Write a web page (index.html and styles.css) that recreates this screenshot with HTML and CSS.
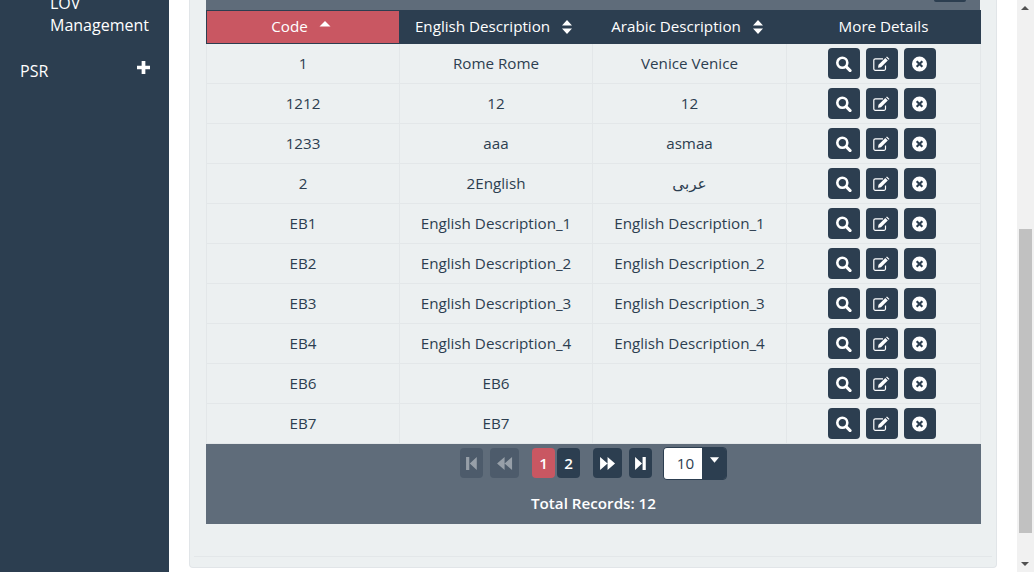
FILE: index.html
```html
<!DOCTYPE html>
<html>
<head>
    <meta charset="utf-8">
    <title>LOV Management</title>
    <link rel="stylesheet" href="styles.css">
</head>
<body>
    <svg class="icon-defs" width="0" height="0">
        <symbol id="i-search" viewBox="0 0 16 16">
            <circle cx="6.8" cy="6.8" r="5" fill="none" stroke="currentColor" stroke-width="2.6"/>
            <path d="M10.6 10.6 L14.6 14.6" stroke="currentColor" stroke-width="3" stroke-linecap="round"/>
        </symbol>
        <symbol id="i-edit" viewBox="0 0 17 16">
            <path d="M12.5 9.5 V12.8 A1.6 1.6 0 0 1 10.9 14.4 H2.4 A1.6 1.6 0 0 1 0.8 12.8 V4.4 A1.6 1.6 0 0 1 2.4 2.8 H10" fill="none" stroke="currentColor" stroke-width="1.2"/>
            <path d="M5.5 8.8 L12.3 2 L14.8 4.5 L8 11.3 L5 11.8 Z M13 1.3 L14 0.4 L16.5 2.9 L15.6 3.8 Z" fill="currentColor"/>
        </symbol>
        <symbol id="i-remove" viewBox="0 0 16 16">
            <path fill-rule="evenodd" d="M8 0.5a7.5 7.5 0 1 0 0 15A7.5 7.5 0 0 0 8 0.5z M5.9 4.4 L8 6.5 L10.1 4.4 L11.6 5.9 L9.5 8 L11.6 10.1 L10.1 11.6 L8 9.5 L5.9 11.6 L4.4 10.1 L6.5 8 L4.4 5.9 Z" fill="currentColor"/>
        </symbol>
    </svg>

    <div class="layout">
        <aside class="sidebar">
            <div class="nav-sub">LOV Management</div>
            <div class="nav-item">
                <span>PSR</span>
                <svg class="plus" viewBox="0 0 14 14"><path d="M5 0h4v5h5v4H9v5H5V9H0V5h5z" fill="currentColor"/></svg>
            </div>
        </aside>

        <main class="content">
            <div class="card">
                <div class="toolbar"><span class="toolbar-btn"></span></div>
                <table class="grid">
                    <colgroup>
                        <col class="col-a">
                        <col class="col-a">
                        <col class="col-b">
                        <col class="col-c">
                    </colgroup>
                    <thead>
                        <tr>
                            <th class="sortable sorted">Code <svg class="sort" viewBox="0 0 12 14"><path d="M6 1 L11.5 6.5 H0.5 Z" fill="currentColor"/></svg></th>
                            <th class="sortable">English Description <svg class="sort" viewBox="0 0 12 14"><path d="M6 0 L11 5.5 H1 Z M1 8.5 H11 L6 14 Z" fill="currentColor"/></svg></th>
                            <th class="sortable">Arabic Description <svg class="sort" viewBox="0 0 12 14"><path d="M6 0 L11 5.5 H1 Z M1 8.5 H11 L6 14 Z" fill="currentColor"/></svg></th>
                            <th>More Details</th>
                        </tr>
                    </thead>
                    <tbody id="rows"></tbody>
                </table>
                <div class="pager">
                    <div class="pager-row">
                        <span class="page-btn off wide-sm"><svg viewBox="0 0 12 14"><path d="M1 1h3v12H1z M11 1v12L4.5 7z" fill="currentColor"/></svg></span>
                        <span class="page-btn off wide"><svg viewBox="0 0 16 14"><path d="M8 1v12L1 7z M15 1v12L8 7z" fill="currentColor"/></svg></span>
                        <span class="pages">
                            <span class="page-btn num current">1</span>
                            <span class="page-btn num">2</span>
                        </span>
                        <span class="page-btn wide"><svg viewBox="0 0 16 14"><path d="M1 1v12l7-6z M8 1v12l7-6z" fill="currentColor"/></svg></span>
                        <span class="page-btn wide-sm"><svg viewBox="0 0 12 14"><path d="M1 1v12l6.5-6z M8 1h3v12H8z" fill="currentColor"/></svg></span>
                        <span class="page-size">
                            <span class="size-value">10</span>
                            <span class="size-arrow"><svg viewBox="0 0 12 8"><path d="M1 1h10L6 7z" fill="currentColor"/></svg></span>
                        </span>
                    </div>
                    <div class="total">Total Records: 12</div>
                </div>
                <div class="card-foot"></div>
            </div>
        </main>

        <div class="scrollbar">
            <span class="arrow-up"></span>
            <span class="track"><span class="thumb"></span></span>
            <span class="arrow-down"></span>
        </div>
    </div>

    <script src="app.js"></script>
</body>
</html>
```

FILE: styles.css
```css
html, body {
    height: 100%;
    margin: 0;
    overflow: hidden;
}
body {
    font-family: "Open Sans", "DejaVu Sans", Arial, sans-serif;
    font-size: 15.2px;
    color: #2c3e50;
    background-color: white;
}
.icon-defs {
    position: absolute;
}
.layout {
    display: flex;
    height: 572px;
}

/* sidebar */
.sidebar {
    width: 169px;
    flex: none;
    background-color: #2c3e50;
    color: white;
    font-size: 16px;
    overflow: hidden;
}
.nav-sub {
    width: 110px;
    margin-top: -8px;
    padding-left: 50px;
    line-height: 22px;
}
.nav-item {
    display: flex;
    justify-content: space-between;
    padding: 24px 19px 0 20px;
    line-height: 22px;
}
.plus {
    width: 13px;
    height: 13px;
    margin-top: 1px;
}

/* main area */
.content {
    flex: 1;
    min-width: 0;
    padding: 0 20px 0 20px;
    overflow: hidden;
}
.card {
    height: 568px;
    box-sizing: border-box;
    padding: 0 16px 0 16px;
    background-color: #ecf0f1;
    border: 1px solid #e1e5e8;
    border-top: none;
    border-radius: 0 0 4px 4px;
}
.toolbar {
    height: 10px;
    background-color: #5f6c7a;
    overflow: hidden;
}
.toolbar-btn {
    display: block;
    width: 32px;
    height: 2px;
    margin-left: 728px;
    background-color: #2c3e50;
    border-radius: 0 0 4px 4px;
}

/* table */
.grid {
    width: 774px;
    border-collapse: collapse;
    table-layout: fixed;
}
.col-a {
    width: 193px;
}
.col-b {
    width: 194px;
}
.col-c {
    width: 194px;
}
.grid th {
    height: 33px;
    padding: 0 0 3px;
    box-sizing: border-box;
    font-weight: normal;
    color: white;
    background-color: #2c3e50;
    border: 1px solid #2c3e50;
    text-align: center;
}
.grid th.sortable {
    padding-right: 4px;
}
.grid th.sorted {
    background-color: #c95762;
}
.sort {
    width: 12px;
    height: 14px;
    margin-left: 7px;
    vertical-align: -2px;
}
.grid td {
    height: 40px;
    padding: 0 0 2px;
    box-sizing: border-box;
    text-align: center;
    border: 1px solid #e3e7e9;
    border-top: none;
}
.grid td.action-cell {
    padding: 0;
}
.actions {
    display: flex;
    justify-content: center;
    gap: 6px;
    padding-right: 4px;
}
.icon-btn {
    display: flex;
    align-items: center;
    justify-content: center;
    width: 32px;
    height: 31px;
    color: white;
    background-color: #2c3e50;
    border-radius: 4px;
}
.icon-btn svg {
    width: 17px;
    height: 16px;
}

/* pager */
.pager {
    width: 775px;
    height: 80px;
    background-color: #5f6c7a;
    color: white;
}
.pager-row {
    display: flex;
    justify-content: center;
    align-items: flex-start;
    padding-top: 3px;
    gap: 7px;
    height: 36px;
}
.page-btn {
    display: flex;
    align-items: center;
    justify-content: center;
    height: 30px;
    margin-top: 1px;
    background-color: #2c3e50;
    border-radius: 4px;
    color: white;
}
.page-btn svg {
    height: 15px;
}
.page-btn.off {
    opacity: 0.35;
}
.wide-sm {
    width: 23px;
}
.wide {
    width: 29px;
}
.pages {
    display: flex;
    gap: 2px;
    margin: 0 6px;
}
.num {
    width: 23px;
    font-weight: 600;
}
.current {
    background-color: #c95762;
}
.page-size {
    display: flex;
    box-sizing: border-box;
    width: 64px;
    height: 33px;
    margin-left: 4px;
    border: 1px solid #2c3e50;
    border-radius: 4px;
    overflow: hidden;
}
.size-value {
    flex: 1;
    padding-left: 5px;
    background-color: white;
    color: #2c3e50;
    text-align: center;
    line-height: 31px;
}
.size-arrow {
    width: 24px;
    background-color: #2c3e50;
    color: white;
    text-align: center;
}
.size-arrow svg {
    width: 11px;
    height: 8px;
    margin-top: 8px;
}
.total {
    margin-top: 9px;
    text-align: center;
    font-weight: 600;
    line-height: 22px;
}
.card-foot {
    margin: 32px -12px 0;
    border-top: 1px solid #e3e7e9;
}

/* page scrollbar */
.scrollbar {
    display: flex;
    flex-direction: column;
    width: 17px;
    flex: none;
    background-color: #f1f1f1;
}
.arrow-up, .arrow-down {
    height: 17px;
    flex: none;
    position: relative;
}
.arrow-up::after, .arrow-down::after {
    content: "";
    position: absolute;
    left: 4px;
    border-left: 4px solid transparent;
    border-right: 4px solid transparent;
}
.arrow-up::after {
    top: 6px;
    border-bottom: 4px solid #505050;
}
.arrow-down::after {
    top: 7px;
    border-top: 4px solid #505050;
}
.track {
    flex: 1;
    display: flex;
    flex-direction: column;
    justify-content: flex-end;
    padding-bottom: 22px;
}
.thumb {
    height: 304px;
    margin: 0 2px;
    background-color: #c1c1c1;
}
```

FILE: app.js
```js
const rows = [
    ['1', 'Rome Rome', 'Venice Venice'],
    ['1212', '12', '12'],
    ['1233', 'aaa', 'asmaa'],
    ['2', '2English', 'عربى'],
    ['EB1', 'English Description_1', 'English Description_1'],
    ['EB2', 'English Description_2', 'English Description_2'],
    ['EB3', 'English Description_3', 'English Description_3'],
    ['EB4', 'English Description_4', 'English Description_4'],
    ['EB6', 'EB6', ''],
    ['EB7', 'EB7', '']
];

const icon = (name) =>
    `<span class="icon-btn"><svg><use href="#i-${name}"></use></svg></span>`;

document.getElementById('rows').innerHTML = rows.map((row) => `
    <tr>
        <td>${row[0]}</td>
        <td>${row[1]}</td>
        <td>${row[2]}</td>
        <td class="action-cell"><div class="actions">${icon('search')}${icon('edit')}${icon('remove')}</div></td>
    </tr>`).join('');
```
